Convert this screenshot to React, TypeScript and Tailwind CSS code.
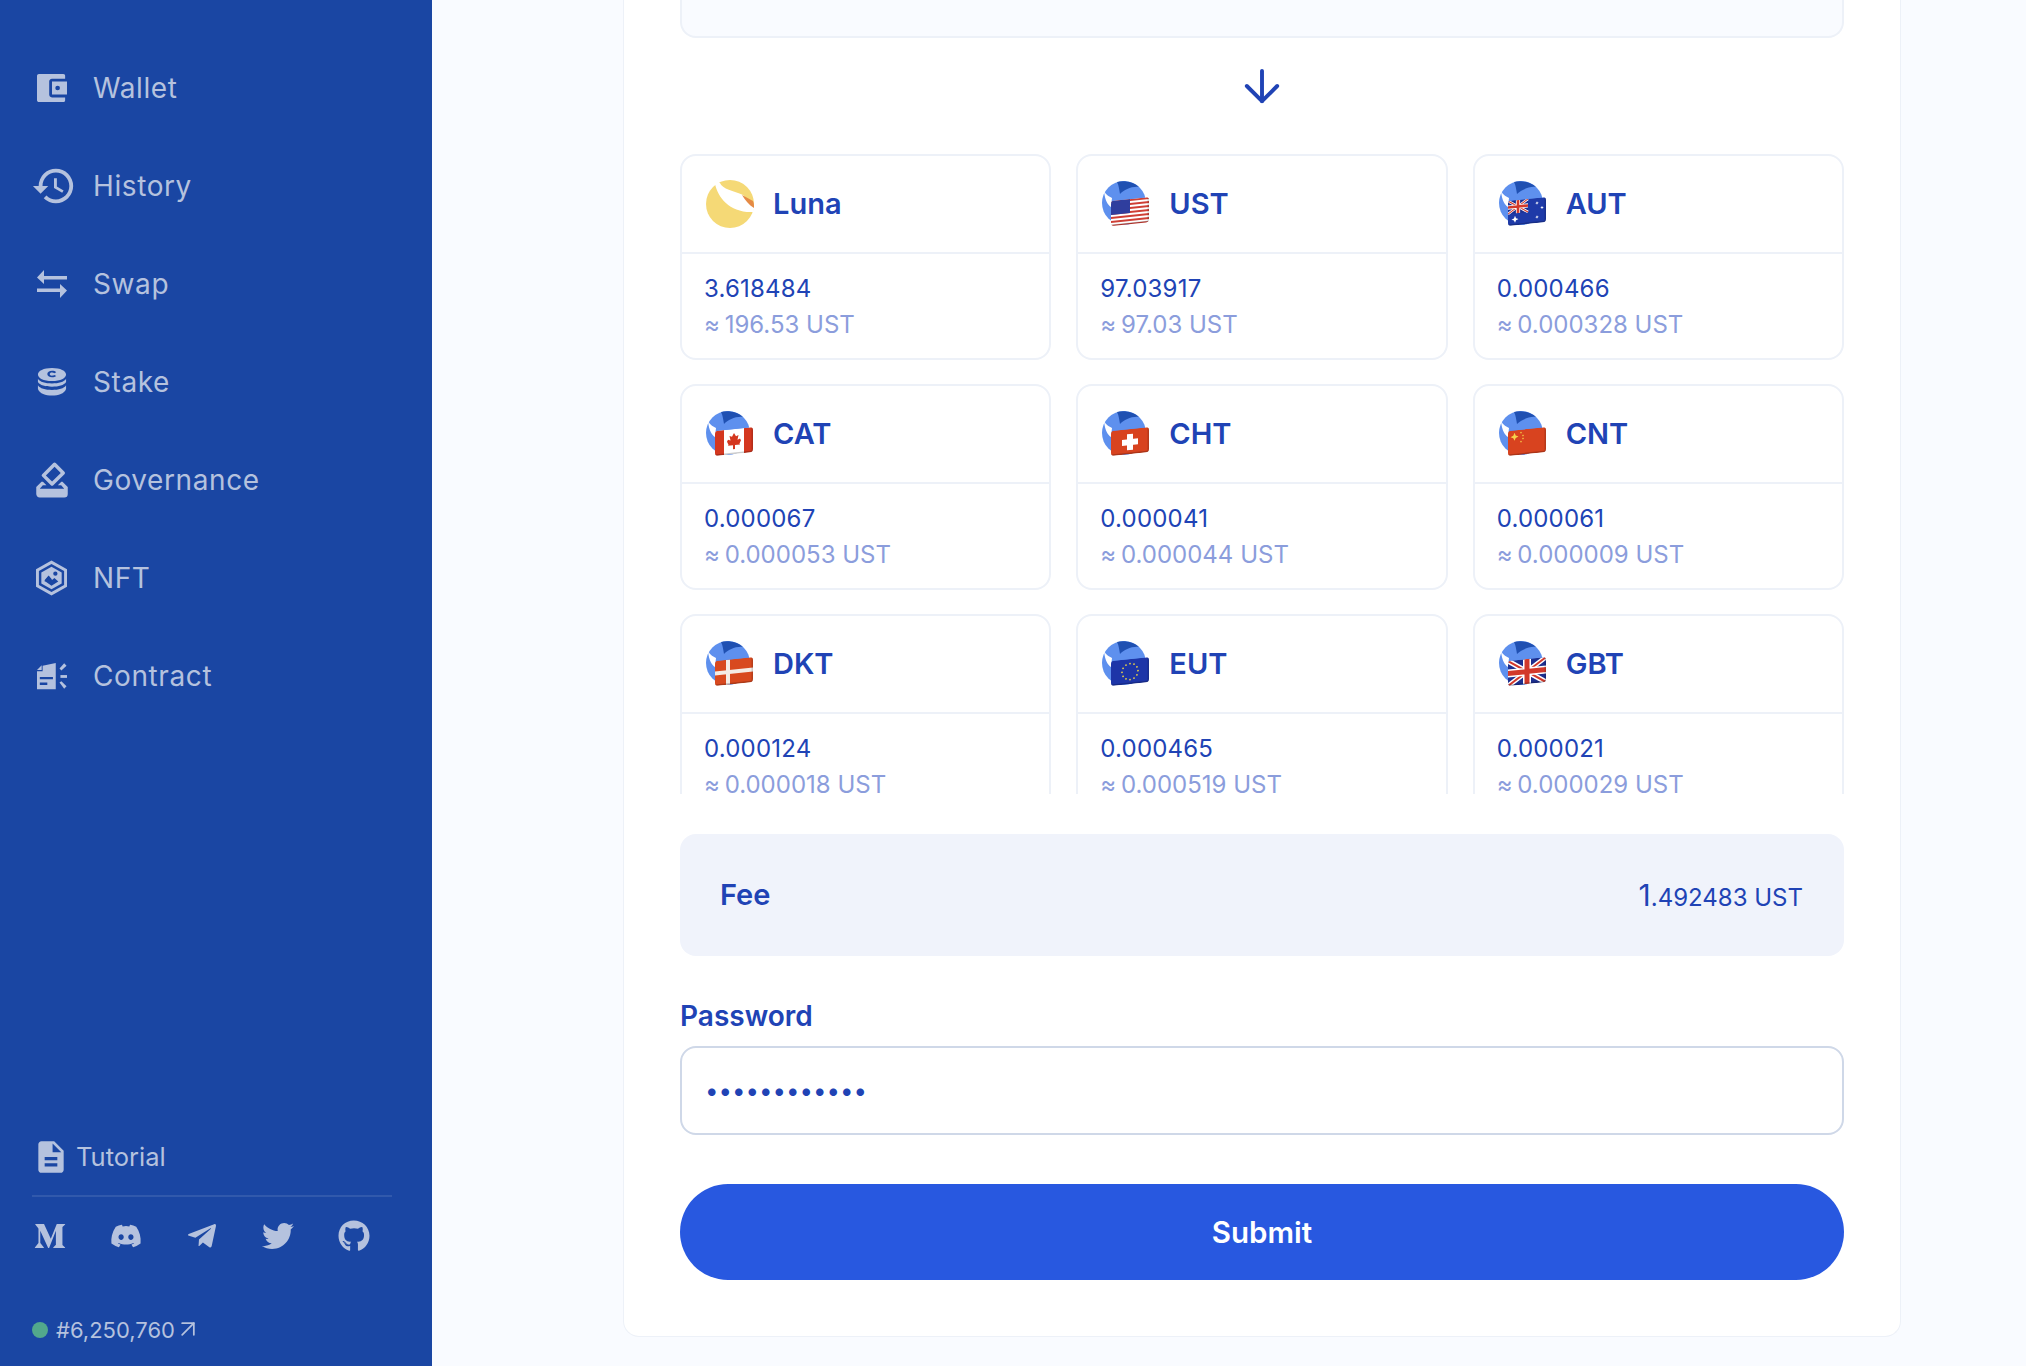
import React from 'react';
import { ArrowDown, ArrowUpRight } from 'lucide-react';
import { FaDiscord, FaGithub, FaMediumM, FaTelegramPlane, FaTwitter } from 'react-icons/fa';
import { MdDescription, MdHistory, MdHowToVote } from 'react-icons/md';

const WalletIcon = () => (
  <svg viewBox="0 0 32 30" className="w-[32px] h-[30px]" fill="currentColor">
    <path d="M2 0 L28 0 C29.5 0 30 1 30 2 L30 5 L16 5 C14 5 13 6.5 13 8 L13 22 C13 23.5 14 25 16 25 L30 25 L30 28 C30 29 29.5 30 28 30 L2 30 C1 30 0 29 0 28 L0 2 C0 1 1 0 2 0 Z" />
    <path fillRule="evenodd" d="M16 8 L32 8 L32 22 L16 22 Z M22 12.5 A2.5 2.5 0 1 0 22 17.5 A2.5 2.5 0 1 0 22 12.5 Z" />
  </svg>
);

const SwapIcon = () => (
  <svg viewBox="0 0 30 28" className="w-[30px] h-[28px]" fill="currentColor">
    <path d="M7 0 L7 6 L30 6 L30 9.5 L7 9.5 L7 14 L0 7.5 Z" />
    <path d="M23 14 L23 18.5 L0 18.5 L0 22 L23 22 L23 28 L30 20.5 Z" />
  </svg>
);

const StakeIcon = () => (
  <svg viewBox="0 0 32 30" className="w-[32px] h-[30px]" fill="currentColor">
    <path fillRule="evenodd" d="M16 0 C25 0 31 3 31 7 C31 11 25 14 16 14 C7 14 1 11 1 7 C1 3 7 0 16 0 Z M16 3 C13 3 11 4.5 11 6.5 C11 8.5 13 10 16 10 C18 10 19.5 9.5 20.5 8.5 L18.5 7.5 C18 8 17 8.2 16 8.2 C14.5 8.2 13.6 7.6 13.6 6.5 C13.6 5.4 14.5 4.8 16 4.8 C17 4.8 18 5.1 18.5 5.6 L20.5 4.6 C19.5 3.5 18 3 16 3 Z" />
    <path d="M1 11.5 C3 15 9 16.5 16 16.5 C23 16.5 29 15 31 11.5 L31 15 C29 18.5 23 20 16 20 C9 20 3 18.5 1 15 Z" />
    <path d="M1 18.5 C3 22 9 23.5 16 23.5 C23 23.5 29 22 31 18.5 L31 22.5 C29 27.5 23 29.5 16 29.5 C9 29.5 3 27.5 1 22.5 Z" />
  </svg>
);

const NftIcon = () => (
  <svg viewBox="0 0 32 36" className="w-[33px] h-[36px] -ml-[1px]" fill="currentColor">
    <path fillRule="evenodd" d="M16 0 L32 9 L32 27 L16 36 L0 27 L0 9 Z M16 3.5 L3 10.8 L3 25.2 L16 32.5 L29 25.2 L29 10.8 Z" />
    <path fillRule="evenodd" d="M16 6.5 L26.5 12.4 L26.5 23.6 L16 29.5 L5.5 23.6 L5.5 12.4 Z M9 20 L13 15.5 L16.5 19.5 L9 21.5 Z" />
    <path d="M9 21 L13 16 L16.5 20 L19 18 L23 21.5 L16 26 Z" fill="#1a46a3" />
    <circle cx="20" cy="13.5" r="2.2" fill="#1a46a3" />
  </svg>
);

const ContractIcon = () => (
  <svg viewBox="0 0 32 28" className="w-[32px] h-[28px]" fill="currentColor">
    <path fillRule="evenodd" d="M6 3 L20 0 L20 28 L0 28 L0 9 L6 9 Z M3 15 L3 17.5 L17 17.5 L17 15 Z M3 21 L3 23.5 L11 23.5 L11 21 Z" />
    <path d="M0 7.5 L5 2.5 L5 7.5 Z" />
    <path d="M24 6 L29 0.5 L31.5 3 L26 8 Z" />
    <path d="M25 13 L32 13 L32 16 L25 16 Z" />
    <path d="M24 21 L26 19.5 L31.5 25 L29 27.5 Z" />
  </svg>
);

const menuItems = [
  { name: 'Wallet', icon: <WalletIcon /> },
  { name: 'History', icon: <MdHistory size={46} className="-ml-[6px] shrink-0" /> },
  { name: 'Swap', icon: <SwapIcon /> },
  { name: 'Stake', icon: <StakeIcon /> },
  { name: 'Governance', icon: <MdHowToVote size={42} className="-ml-[6px] shrink-0" /> },
  { name: 'NFT', icon: <NftIcon /> },
  { name: 'Contract', icon: <ContractIcon /> },
];

const Star = ({ x, y, r, fill = '#ffffff' }: { x: number; y: number; r: number; fill?: string }) => (
  <path
    fill={fill}
    d={`M${x} ${y - r} L${x + r * 0.3} ${y - r * 0.3} L${x + r} ${y} L${x + r * 0.3} ${y + r * 0.3} L${x} ${y + r} L${x - r * 0.3} ${y + r * 0.3} L${x - r} ${y} L${x - r * 0.3} ${y - r * 0.3} Z`}
  />
);

// mini union jack, w x h from the top-left corner of the flag
const Union = ({ w, h }: { w: number; h: number }) => (
  <g transform={`translate(9 21) scale(${w / 38} ${h / 25})`}>
    <rect width="38" height="25" fill="#1d2f8f" />
    <path d="M0 0 L38 25 M38 0 L0 25" stroke="#fff" strokeWidth="5" />
    <path d="M0 0 L38 25 M38 0 L0 25" stroke="#d2392b" strokeWidth="2" />
    <path d="M19 0 V25 M0 12.5 H38" stroke="#fff" strokeWidth="8" />
    <path d="M19 0 V25 M0 12.5 H38" stroke="#d2392b" strokeWidth="5" />
  </g>
);

const flags: Record<string, React.ReactNode> = {
  UST: (
    <>
      <rect x="9" y="21" width="38" height="25" fill="#fff" />
      {[21, 25, 29, 33, 37, 41, 45].map((y) => (
        <rect key={y} x="9" y={y} width="38" height="2" fill="#cf3f35" />
      ))}
      <rect x="9" y="21" width="19" height="14" fill="#2f3e9e" />
    </>
  ),
  AUT: (
    <>
      <rect x="9" y="21" width="38" height="25" fill="#1e3aa8" />
      <Union w={20} h={13} />
      <Star x={16} y={40} r={3.5} />
      <Star x={38} y={26} r={1.8} />
      <Star x={43} y={31} r={1.8} />
      <Star x={38} y={40} r={1.8} />
    </>
  ),
  CAT: (
    <>
      <rect x="9" y="21" width="38" height="25" fill="#fff" />
      <rect x="9" y="21" width="9" height="25" fill="#d4371f" />
      <rect x="38" y="21" width="9" height="25" fill="#d4371f" />
      <path fill="#d4371f" d="M28 25 L30 28.5 L32.5 27.5 L31.5 32 L34 31 L35 33 L33.5 36 L34 37 L29 37 V41 H27 V37 L22 37 L22.5 36 L21 33 L22 31 L24.5 32 L23.5 27.5 L26 28.5 Z" />
    </>
  ),
  CHT: (
    <>
      <rect x="9" y="21" width="38" height="25" fill="#d8431f" />
      <rect x="25" y="26" width="6" height="16" fill="#fff" />
      <rect x="20" y="31" width="16" height="6" fill="#fff" />
    </>
  ),
  CNT: (
    <>
      <rect x="9" y="21" width="38" height="25" fill="#d8431f" />
      <Star x={15.5} y={27.5} r={4} fill="#f6d24a" />
      <Star x={22} y={24} r={1.2} fill="#f6d24a" />
      <Star x={24} y={27} r={1.2} fill="#f6d24a" />
      <Star x={24} y={30} r={1.2} fill="#f6d24a" />
      <Star x={22} y={33} r={1.2} fill="#f6d24a" />
    </>
  ),
  DKT: (
    <>
      <rect x="9" y="21" width="38" height="25" fill="#d8491f" />
      <rect x="20" y="21" width="4" height="25" fill="#f4ece6" />
      <rect x="9" y="31.5" width="38" height="4" fill="#f4ece6" />
    </>
  ),
  EUT: (
    <>
      <rect x="9" y="21" width="38" height="25" fill="#1d35a8" />
      {[0, 30, 60, 90, 120, 150, 180, 210, 240, 270, 300, 330].map((a) => (
        <circle
          key={a}
          cx={28 + 8 * Math.cos((a * Math.PI) / 180)}
          cy={33.5 + 8 * Math.sin((a * Math.PI) / 180)}
          r="0.9"
          fill="#e8cf4a"
        />
      ))}
    </>
  ),
  GBT: <Union w={38} h={25} />,
};

const TokenIcon = ({ code }: { code: string }) => {
  if (code === 'Luna') {
    return (
      <svg viewBox="0 0 48 48" className="w-[48px] h-[48px] shrink-0">
        <circle cx="24" cy="24" r="24" fill="#f5d976" />
        <path fill="#fff" d="M9 4 C12 18 24 33 47 32 L48.5 27 L37 15 C28 11 16 9 14 3 L9 0 Z" />
        <path fill="#e58a45" d="M36 15 L47 21 C48 23 48 26 48 28 C43 25 39 20 36 15 Z" />
      </svg>
    );
  }
  const clipId = `flag-${code}`;
  return (
    <svg viewBox="0 0 48 46" className="w-[48px] h-[46px] shrink-0">
      <defs>
        <clipPath id={clipId}>
          <rect x="9" y="21" width="38" height="25" rx="3" />
        </clipPath>
      </defs>
      <circle cx="22" cy="22" r="22" fill="#5e90ee" />
      <path fill="#1f50b2" d="M15 1 C22 -1 32 1 37 6 C30 5 22 9 18 13 C17 8 17 5 15 1 Z" />
      <path fill="#fff" d="M2 10 C4 14 8 16 10 17 L9 26 C6 24 3 20 2 10 Z" />
      <g transform="skewY(-6)">
        <g clipPath={`url(#${clipId})`}>
          {flags[code]}
          {/* darker fold along the lower and right edge */}
          <rect x="9" y="44.5" width="38" height="1.5" fill="#000" opacity="0.2" />
          <rect x="45.5" y="21" width="1.5" height="25" fill="#000" opacity="0.15" />
        </g>
      </g>
    </svg>
  );
};

const tokens = [
  { code: 'Luna', value: '3.618484', ust: '196.53 UST' },
  { code: 'UST', value: '97.03917', ust: '97.03 UST' },
  { code: 'AUT', value: '0.000466', ust: '0.000328 UST' },
  { code: 'CAT', value: '0.000067', ust: '0.000053 UST' },
  { code: 'CHT', value: '0.000041', ust: '0.000044 UST' },
  { code: 'CNT', value: '0.000061', ust: '0.000009 UST' },
  { code: 'DKT', value: '0.000124', ust: '0.000018 UST' },
  { code: 'EUT', value: '0.000465', ust: '0.000519 UST' },
  { code: 'GBT', value: '0.000021', ust: '0.000029 UST' },
];

export default function App() {
  return (
    <div className="flex h-[1366px] w-full overflow-hidden bg-[#f9fbff] font-['Inter',sans-serif] text-[#2043b5]">
      {/* Sidebar */}
      <aside className="flex flex-col justify-between w-[432px] h-full shrink-0 bg-[#1a46a3] text-[#b5c2de]">
        <nav className="pt-[39px] pl-[37px]">
          {menuItems.map((item) => (
            <div key={item.name} className="flex items-center h-[98px] gap-[26px]">
              <div className="w-[30px] flex items-center justify-start">{item.icon}</div>
              <span className="text-[28px] tracking-[0.6px]">{item.name}</span>
            </div>
          ))}
        </nav>

        <div className="pl-[32px] pr-[40px] pb-[21px]">
          <div className="flex items-center h-[60px] gap-[6px] mb-[8px]">
            <MdDescription size={38} />
            <span className="text-[25.5px]">Tutorial</span>
          </div>
          <div className="border-t-2 border-white/10" />
          <div className="flex items-center gap-[44px] mt-[23px] mb-[63px] h-[32px] pl-[2px]">
            <FaMediumM size={32} />
            <FaDiscord size={32} />
            <FaTelegramPlane size={32} />
            <FaTwitter size={32} />
            <FaGithub size={32} />
          </div>
          <div className="flex items-center text-[22px] leading-[30px]">
            <span className="w-[16px] h-[16px] rounded-full bg-[#52a88c] mr-[8px]" />
            #6,250,760
            <ArrowUpRight size={28} strokeWidth={1.5} className="-ml-[1px] -mt-[3px]" />
          </div>
        </div>
      </aside>

      {/* Main */}
      <main className="flex-1">
        <div className="ml-[191px] w-[1278px] bg-white border border-t-0 border-[#edf1f8] rounded-b-2xl px-[56px] pb-[56px]">
          <div className="h-[38px] bg-[#f9fbff] border-2 border-t-0 border-[#edf1f8] rounded-b-2xl" />

          <div className="flex justify-center mt-[22px] mb-[42px]">
            <ArrowDown size={52} strokeWidth={1.8} />
          </div>

          <div className="h-[640px] overflow-hidden">
            <div className="grid grid-cols-3 gap-x-[25px] gap-y-[24px]">
              {tokens.map((token) => (
                <div key={token.code} className="h-[206px] bg-white border-2 border-[#edf1f8] rounded-2xl">
                  <div className="flex items-center gap-[19px] h-[98px] pl-[24px] border-b-2 border-[#edf1f8]">
                    <TokenIcon code={token.code} />
                    <span className="text-[29px] font-semibold">{token.code}</span>
                  </div>
                  <div className="pl-[22px] pt-[17px] text-[24px] leading-[36px]">
                    <div className="tracking-[0.2px]">{token.value}</div>
                    <div className="text-[#8b9ddc]">
                      <span className="-mr-[2px]">≈</span> {token.ust}
                    </div>
                  </div>
                </div>
              ))}
            </div>
          </div>

          <div className="flex items-center justify-between h-[122px] mt-[40px] pl-[40px] pr-[41px] bg-[#f0f3fb] rounded-2xl">
            <span className="text-[29px] font-semibold">Fee</span>
            <span className="text-[24px]">
              <span className="text-[30px]">1</span>.492483 UST
            </span>
          </div>

          <div className="mt-[43px] mb-[13px] text-[28px] leading-[34px] font-semibold">Password</div>
          <input
            type="password"
            readOnly
            value="aaaaaaaaaaaa"
            className="block w-full h-[89px] px-[23px] bg-white border-2 border-[#cfd8e8] rounded-2xl text-[24px] text-[#2043b5] outline-none"
          />

          <button className="block w-full h-[96px] mt-[49px] rounded-full bg-[#2858e0] text-white text-[29.5px] font-semibold">
            Submit
          </button>
        </div>
      </main>
    </div>
  );
}
